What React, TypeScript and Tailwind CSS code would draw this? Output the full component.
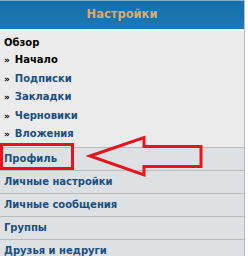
import React from 'react'

const overview = [
  { label: 'Начало', active: true },
  { label: 'Подписки', active: false },
  { label: 'Закладки', active: false },
  { label: 'Черновики', active: false },
  { label: 'Вложения', active: false },
]

const sections = ['Профиль', 'Личные настройки', 'Личные сообщения', 'Группы', 'Друзья и недруги']

export default function App() {
  return (
    <div className="relative w-[248px] h-[256px] bg-white overflow-hidden font-['DejaVu_Sans',Verdana,sans-serif] text-[10px] font-bold">
      <div className="w-[245px] border-r border-[#b9bdc1]">
        <div className="h-[29px] border-t border-[#7fb0c8] bg-gradient-to-b from-[#166fa8] to-[#1c79b3] flex items-center justify-center text-[#dfa86c] text-[11.5px]">
          Настройки
        </div>
        <div className="border-t-2 border-[#f4f6f7] bg-[#ebebeb] pt-[3px] pb-[3.5px] px-[4px] leading-[17.4px]">
          <div className="text-black">Обзор</div>
          {overview.map((item) => (
            <div key={item.label} className={item.active ? 'text-black' : 'text-[#1b4f7f]'}>
              <span className="text-black text-[9px] mr-[5px]">»</span>
              {item.label}
            </div>
          ))}
        </div>
        {sections.map((s) => (
          <div key={s} className="h-[23px] border-t border-[#b6babe] bg-[#dee1e4] px-[4px] flex items-center text-[#1b4f7f]">
            {s}
          </div>
        ))}
      </div>

      <div className="absolute left-0 top-[143px] w-[74px] h-[27px] border-[3px] border-[#e5141d]" />
      <svg className="absolute left-0 top-0" width="248" height="256" viewBox="0 0 248 256">
        <path
          d="M90 156 L144 137.5 L144 146.5 L201 146.5 L201 166.5 L144 166.5 L144 175 Z"
          fill="none"
          stroke="#e5141d"
          strokeWidth="3"
          strokeLinejoin="miter"
        />
      </svg>
    </div>
  )
}
